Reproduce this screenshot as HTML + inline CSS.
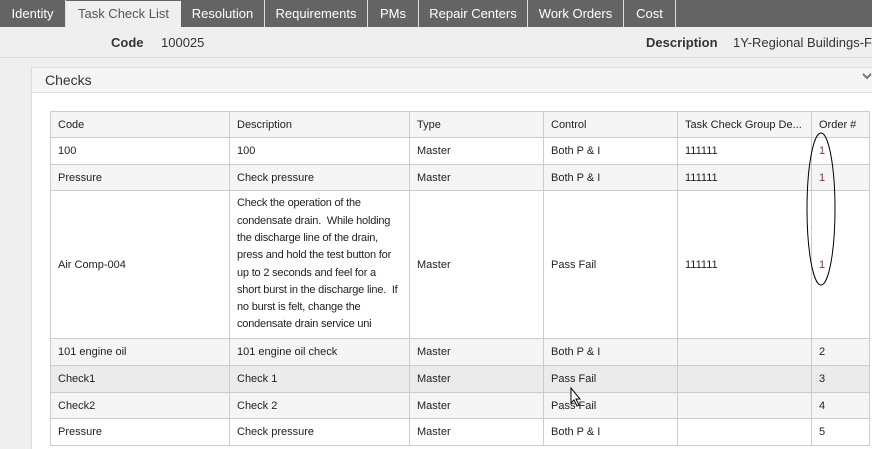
<!DOCTYPE html>
<html><head><style>
html,body{margin:0;width:872px;height:449px;overflow:hidden}
body{background:#efefef;font-family:"Liberation Sans",Arial,sans-serif;position:relative}
.tabs{position:absolute;left:0;top:0;width:872px;height:27px;background:#646464}
.tab{position:absolute;top:0;height:27px;line-height:27px;color:#fff;font-size:13px;text-align:center;border-right:1px solid #ddd;box-sizing:border-box}
.tab.act{background:#efefef;color:#555;border-right:none;top:1px;height:26px;line-height:25px}
.hdr{position:absolute;top:27px;left:0;width:872px;height:30px;border-bottom:1px solid #ddd;font-size:13px;color:#333}
.panel{position:absolute;left:31px;top:67px;width:860px;height:400px;background:#fff;border:1px solid #ddd}
.ph{height:24px;background:#f5f5f5;border-bottom:1px solid #ddd;font-size:14px;line-height:24px;padding-left:13px;color:#333}
table{position:absolute;left:18px;top:43px;border-collapse:collapse;font-size:11px;color:#222}
td{border:1px solid #ccc;padding:0 7px;vertical-align:middle}
tr.h td{background:#f5f5f5;height:25px}
tr.w td{background:#fff}
tr.g td{background:#f5f5f5}
tr.d td{background:#ebebeb}
.r{color:#7a3a2a}
</style></head><body>
<div class="tabs">
<div class="tab" style="left:0;width:66px">Identity</div>
<div class="tab act" style="left:66px;width:115px">Task Check List</div>
<div class="tab" style="left:181px;width:84px">Resolution</div>
<div class="tab" style="left:265px;width:103px">Requirements</div>
<div class="tab" style="left:368px;width:51px">PMs</div>
<div class="tab" style="left:419px;width:109px">Repair Centers</div>
<div class="tab" style="left:528px;width:96px">Work Orders</div>
<div class="tab" style="left:624px;width:52px">Cost</div>
</div>
<div class="hdr">
<span style="position:absolute;left:111px;top:8px;font-weight:bold">Code</span>
<span style="position:absolute;left:161px;top:8px">100025</span>
<span style="position:absolute;left:646px;top:8px;font-weight:bold">Description</span>
<span style="position:absolute;left:733px;top:8px;white-space:nowrap">1Y-Regional Buildings-Fire</span>
</div>
<div class="panel">
<div class="ph">Checks</div>
<table>
<colgroup><col style="width:179px"><col style="width:180px"><col style="width:134px"><col style="width:134px"><col style="width:134px"><col style="width:58px"></colgroup>
<tr class="h"><td>Code</td><td>Description</td><td>Type</td><td>Control</td><td>Task Check Group De...</td><td>Order #</td></tr>
<tr class="w" style="height:27px"><td>100</td><td>100</td><td>Master</td><td>Both P &amp; I</td><td>111111</td><td class="r">1</td></tr>
<tr class="g" style="height:26px"><td>Pressure</td><td>Check pressure</td><td>Master</td><td>Both P &amp; I</td><td>111111</td><td class="r">1</td></tr>
<tr class="w" style="height:148px"><td>Air Comp-004</td><td style="line-height:17.3px;letter-spacing:-0.2px">Check the operation of the condensate drain.&nbsp; While holding the discharge line of the drain, press and hold the test button for up to 2 seconds and feel for a short burst in the discharge line.&nbsp; If no burst is felt, change the condensate drain service uni</td><td>Master</td><td>Pass Fail</td><td>111111</td><td class="r">1</td></tr>
<tr class="g" style="height:27px"><td>101 engine oil</td><td>101 engine oil check</td><td>Master</td><td>Both P &amp; I</td><td></td><td>2</td></tr>
<tr class="d" style="height:27px"><td>Check1</td><td>Check 1</td><td>Master</td><td>Pass Fail</td><td></td><td>3</td></tr>
<tr class="g" style="height:26px"><td>Check2</td><td>Check 2</td><td>Master</td><td>Pass Fail</td><td></td><td>4</td></tr>
<tr class="w" style="height:27px"><td>Pressure</td><td>Check pressure</td><td>Master</td><td>Both P &amp; I</td><td></td><td>5</td></tr>
</table>
</div>
<svg style="position:absolute;left:0;top:0" width="872" height="449">
<path d="M863 74 L867 78 L871 74" fill="none" stroke="#777" stroke-width="2"/>
<ellipse cx="821" cy="209" rx="14" ry="76" fill="none" stroke="#000" stroke-width="1"/>
<path d="M571 388 L571 403 L574 400 L577 406 L579 405 L576 399 L580 399 Z" fill="#fff" stroke="#000" stroke-width="1"/>
</svg>
</body></html>
